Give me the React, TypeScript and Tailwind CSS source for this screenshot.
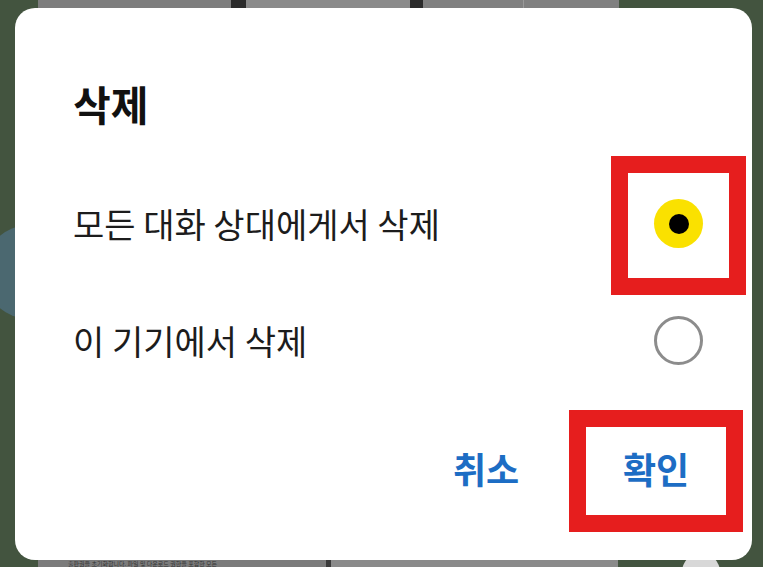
import React, { useState } from 'react';

const options = [
  { id: 'all', label: '모든 대화 상대에게서 삭제' },
  { id: 'device', label: '이 기기에서 삭제' },
];

const Radio: React.FC<{ checked: boolean; highlight?: boolean }> = ({ checked, highlight }) => (
  <div className="relative w-[49px] h-[49px] shrink-0">
    {checked ? (
      <div className="w-full h-full rounded-full bg-[#fae100] flex items-center justify-center">
        <div className="w-[20px] h-[20px] rounded-full bg-black" />
      </div>
    ) : (
      <div className="w-full h-full rounded-full border-[3px] border-[#8c8c8c] bg-white" />
    )}
    {highlight && (
      <div className="absolute left-[-43px] top-[-43px] w-[135px] h-[139px] border-[17px] border-[#e61e1e]" />
    )}
  </div>
);

const App: React.FC = () => {
  const [selected, setSelected] = useState('all');

  return (
    <div className="relative w-[763px] h-[567px] overflow-hidden bg-[#43543f] font-['Noto_Sans_CJK_KR','Noto_Sans',sans-serif]">
      {/* background app content */}
      <div className="flex flex-col justify-between h-full">
        <div className="flex h-[20px] pl-[38px]">
          <div className="w-[193px] bg-[#7d7d7d]" />
          <div className="w-[15px] bg-[#2b2b2b]" />
          <div className="w-[164px] bg-[#8a8a8a] border-b-2 border-[#3a3a3a]" />
          <div className="w-[13px] bg-[#2b2b2b]" />
          <div className="w-[196px] bg-[#808080] flex items-end text-[7px] text-[#3d6fa8]">
            <span className="w-[100px] text-center">기본</span>
            <span className="w-px h-full bg-[#999]" />
            <span className="flex-1 text-center">확률</span>
          </div>
        </div>
        <div className="flex h-[20px] pl-[38px]">
          <div className="w-[288px] bg-[#7b7b7b] pt-[12px] pl-[30px] text-[6px] text-[#333] whitespace-nowrap">
            출판권을 초기화합니다. 파일 및 다운로드 권한을 포함한 모든
          </div>
          <div className="w-[5px] bg-[#3a3a3a]" />
          <div className="w-[287px] bg-[#8a8a8a]" />
          <div className="flex-1 flex justify-center pl-[20px]">
            <div className="w-[38px] h-full rounded-t-full bg-[#d8d8d8] mt-[6px]" />
          </div>
        </div>
      </div>
      <div className="absolute left-[-17px] top-[225px] w-[94px] h-[94px] rounded-full bg-[#4b6870]" />

      {/* dialog */}
      <div className="absolute left-[15px] top-[8px] w-[737px] h-[552px] bg-white rounded-[20px] flex flex-col">
        <div className="h-[60px] mt-[65px] pl-[58px] flex items-center">
          <h2 className="text-[41px] leading-none font-bold text-[#111]">삭제</h2>
        </div>
        <div className="mt-[32px] flex flex-col">
          {options.map((opt) => (
            <button
              key={opt.id}
              onClick={() => setSelected(opt.id)}
              className="h-[117px] pl-[58px] pr-[49px] flex items-center justify-between text-left"
            >
              <span className="text-[34px] leading-none text-[#1c1c1c]">{opt.label}</span>
              <Radio checked={selected === opt.id} highlight={opt.id === 'all'} />
            </button>
          ))}
        </div>
        <div className="flex justify-end items-center gap-[30px] pr-[26px] mt-[28px]">
          <button className="w-[140px] h-[88px] pb-[6px] flex items-center justify-center text-[36px] font-bold text-[#1d6dc4]">
            취소
          </button>
          <button className="relative w-[140px] h-[88px] pb-[6px] flex items-center justify-center text-[36px] font-bold text-[#1d6dc4]">
            확인
            <span className="absolute -inset-[17px] border-[17px] border-[#e61e1e]" />
          </button>
        </div>
      </div>
    </div>
  );
};

export default App;
